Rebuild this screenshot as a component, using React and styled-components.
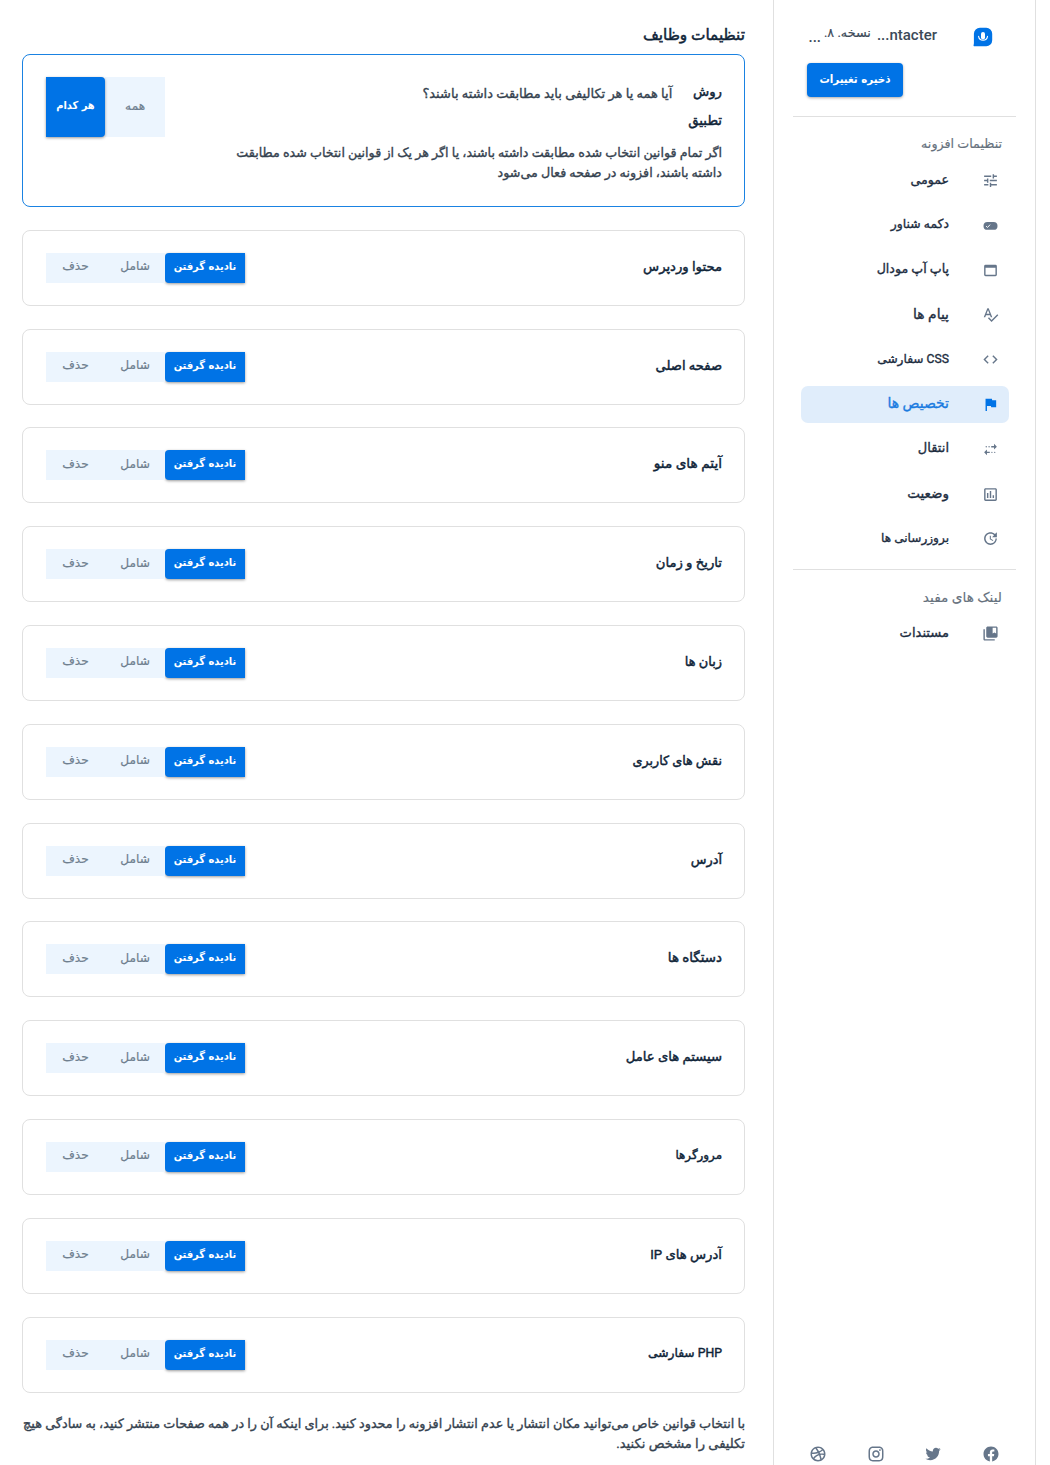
import styled, { createGlobalStyle } from "styled-components";
import {
  MdTune,
  MdOutlineWebAsset,
  MdSpellcheck,
  MdCode,
  MdFlag,
  MdMultipleStop,
  MdOutlineInsertChart,
  MdUpdate,
  MdCollectionsBookmark,
} from "react-icons/md";
import { RiFacebookCircleFill, RiTwitterFill, RiInstagramLine, RiDribbbleLine } from "react-icons/ri";

const GlobalStyle = createGlobalStyle`
  * {
    box-sizing: border-box;
  }

  body {
    margin: 0;
    background-color: #fff;
    color: #0f2438;
    font-family: Roboto, "DejaVu Sans", sans-serif;
    font-size: 13px;
  }
`;

const Page = styled.div`
  width: 1050px;
  height: 1465px;
  padding-right: 14px;
  overflow: hidden;

  display: flex;
`;

const Sidebar = styled.aside`
  width: 263px;
  height: 100%;
  padding: 0 19px;
  border: solid #e0e0e0;
  border-width: 0 1px;

  display: flex;
  flex-direction: column;
`;

const Brand = styled.div`
  height: 117px;
  padding: 26px 23px 0 14px;
  border-bottom: 1px solid #e0e0e0;
`;

const BrandTop = styled.div`
  height: 37.4px;

  display: flex;
  align-items: flex-start;

  svg {
    flex-shrink: 0;
    margin-top: 1px;
  }
`;

const BrandName = styled.div`
  margin-right: 36px;
  color: #3c4a58;
  font-size: 15px;
  font-weight: 500;
  line-height: 19px;
  white-space: nowrap;
`;

const Version = styled.div`
  margin-right: 6px;
  color: #3c4a58;
  font-size: 12.8px;
  line-height: 14px;
  white-space: nowrap;
  -webkit-text-stroke: 0.2px;
`;

const Ellipsis = styled.span`
  margin-right: 3px;
  color: #3c4a58;
  font-size: 15px;
  font-weight: 500;
  line-height: 23px;
`;

const SaveButton = styled.button`
  width: 96px;
  height: 34px;
  margin-right: auto;
  padding: 0 0 3px;
  border: 0;
  border-radius: 4px;
  background-color: #0073e6;
  box-shadow: 0 1px 3px rgba(0, 0, 0, 0.35);

  display: block;

  color: #fff;
  font-family: "DejaVu Sans Condensed", "DejaVu Sans", sans-serif;
  font-size: 11.4px;
  font-weight: 700;
  white-space: nowrap;
`;

const GroupTitle = styled.div`
  height: 42px;
  padding: 17px 14px 0 0;
  color: #66717d;
  font-size: ${({ $size }) => $size || 12.7}px;
  line-height: 20px;
  -webkit-text-stroke: 0.15px;
`;

const Menu = styled.nav`
  padding: 3px 7px 0 8px;

  display: flex;
  flex-direction: column;
  gap: 7.8px;
`;

const MenuItem = styled.a`
  height: 37px;
  padding-right: 10px;
  border-radius: 7px;
  background-color: ${({ $active }) => ($active ? "#e0edfb" : "transparent")};
  color: ${({ $active }) => ($active ? "#1a7be0" : "#1d2d3f")};

  display: flex;
  align-items: center;
  gap: 33px;

  svg {
    flex-shrink: 0;
    color: ${({ $active }) => ($active ? "#0073e6" : "#66768a")};
  }
`;

const MenuLabel = styled.span`
  padding-bottom: 2px;
  font-size: ${({ $size }) => $size || 12.5}px;
  font-weight: 400;
  line-height: 20px;
  white-space: nowrap;
  -webkit-text-stroke: 0.35px;
`;

const Divider = styled.div`
  height: 1px;
  margin-top: 12px;
  flex-shrink: 0;
  background-color: #e0e0e0;
`;

const Social = styled.div`
  height: 20px;
  margin-top: auto;
  padding: 0 16px;
  color: #66768a;

  display: flex;
  justify-content: space-between;
`;

const Main = styled.main`
  width: 773px;
  padding: 22px 28px 0 22px;
`;

const Title = styled.h1`
  height: 32px;
  margin: 0;
  font-size: 15.3px;
  font-weight: 400;
  line-height: 26px;
  -webkit-text-stroke: 0.5px;
`;

const Card = styled.section`
  height: ${({ $tall }) => ($tall ? "153px" : "76px")};
  margin-bottom: 22.8px;
  padding: 22px;
  border: 1px solid ${({ $tall }) => ($tall ? "#1a82e2" : "#e0e0e0")};
  border-radius: 8px;

  display: flex;
  justify-content: space-between;
`;

const CardTitle = styled.h2`
  margin: 0;
  font-size: ${({ $size }) => $size || 13}px;
  font-weight: 400;
  line-height: ${({ $tall }) => ($tall ? "29px" : "27.4px")};
  white-space: nowrap;
  -webkit-text-stroke: 0.45px;
`;

const Rule = styled.div`
  width: 500px;
`;

const RuleTop = styled.div`
  height: 66px;

  display: flex;
  gap: 16px;
`;

const Text = styled.p`
  margin: 0;
  color: #35424f;
  font-size: ${({ $size }) => $size || 12.7}px;
  line-height: 19.7px;
  white-space: nowrap;
  -webkit-text-stroke: 0.35px;
`;

const Question = styled(Text)`
  padding-top: 7px;
`;

const Note = styled.div`
  margin-top: -1px;
`;

const Toggle = styled.div`
  height: ${({ $tall }) => ($tall ? "60px" : "30px")};
  margin-left: 0.6px;

  display: flex;
`;

const Option = styled.button`
  width: ${({ $wide }) => ($wide ? "80px" : "59.7px")};
  height: 100%;
  padding: 0 0 3px;
  border: 0;
  border-radius: ${({ $radius }) => $radius || "0"};
  background-color: ${({ $on }) => ($on ? "#0073e6" : "#ecf5fe")};
  box-shadow: ${({ $on }) => ($on ? "0 1px 3px rgba(0, 0, 0, 0.4)" : "none")};

  color: ${({ $on }) => ($on ? "#fff" : "#6f7f8f")};
  font-family: ${({ $on }) => ($on ? '"DejaVu Sans Condensed", ' : "")}"DejaVu Sans", sans-serif;
  font-size: ${({ $on }) => ($on ? "11px" : "12.2px")};
  font-weight: ${({ $on }) => ($on ? 700 : 400)};
  white-space: nowrap;
  -webkit-text-stroke: ${({ $on }) => ($on ? "0" : "0.2px")};
`;

const LogoIcon = () => (
  <svg width="20" height="20" viewBox="0 0 20 20">
    <path d="M7 .8h6.2A6 6 0 0 1 19.2 6.8v6.4a6 6 0 0 1-6 6H1L.5 18.8l.4-2.6V6.8A6 6 0 0 1 7 .8z" fill="#0073e6" />
    <rect x="8" y="5" width="4" height="7.6" rx="2" fill="#fff" />
    <path d="M5.6 9.4a4.5 4.5 0 0 0 8.9 0" fill="none" stroke="#fff" strokeWidth="1.1" strokeLinecap="round" />
  </svg>
);

const PillIcon = () => (
  <svg width="17" height="17" viewBox="0 0 18 18">
    <rect x="1.6" y="5.4" width="14.8" height="8.2" rx="4.1" fill="currentColor" />
    <path d="M4.3 9.6l1.5 1.5 2.8-3" fill="none" stroke="#fff" strokeWidth="1" />
  </svg>
);

const menu = [
  { label: "عمومی", size: 12.6, Icon: MdTune },
  { label: "دکمه شناور", size: 12.4, Icon: PillIcon },
  { label: "پاپ آپ مودال", size: 12.6, Icon: MdOutlineWebAsset },
  { label: "پیام ها", size: 13.9, Icon: MdSpellcheck },
  { label: "CSS سفارشی", size: 12.2, Icon: MdCode },
  { label: "تخصیص ها", size: 14, Icon: MdFlag, active: true },
  { label: "انتقال", size: 13, Icon: MdMultipleStop },
  { label: "وضعیت", size: 13.5, Icon: MdOutlineInsertChart },
  { label: "بروزرسانی ها", size: 12.1, Icon: MdUpdate },
];

const rules = [
  { label: "محتوا وردپرس", size: 13.2 },
  { label: "صفحه اصلی", size: 13.1 },
  { label: "آیتم های منو", size: 13.7 },
  { label: "تاریخ و زمان", size: 13.2 },
  { label: "زبان ها", size: 12.9 },
  { label: "نقش های کاربری", size: 12.7 },
  { label: "آدرس", size: 12.9 },
  { label: "دستگاه ها", size: 13.4 },
  { label: "سیستم های عامل", size: 13.2 },
  { label: "مرورگرها", size: 11.9 },
  { label: "آدرس های IP", size: 13.2 },
  { label: "PHP سفارشی", size: 12.3 },
];

export default function App() {
  return (
    <>
      <GlobalStyle />
      <Page dir="rtl">
        <Sidebar>
          <Brand>
            <BrandTop>
              <LogoIcon />
              <BrandName dir="ltr">...ntacter</BrandName>
              <Version>نسخه. ۸.</Version>
              <Ellipsis>...</Ellipsis>
            </BrandTop>
            <SaveButton>ذخیره تغییرات</SaveButton>
          </Brand>

          <GroupTitle>تنظیمات افزونه</GroupTitle>
          <Menu>
            {menu.map(({ label, size, Icon, active }) => (
              <MenuItem key={label} $active={active}>
                <Icon size={17} />
                <MenuLabel $size={size}>{label}</MenuLabel>
              </MenuItem>
            ))}
          </Menu>

          <Divider />
          <GroupTitle $size={13.7}>لینک های مفید</GroupTitle>
          <Menu>
            <MenuItem>
              <MdCollectionsBookmark size={17} />
              <MenuLabel $size={13.1}>مستندات</MenuLabel>
            </MenuItem>
          </Menu>

          <Social>
            <RiFacebookCircleFill size={18} />
            <RiTwitterFill size={18} />
            <RiInstagramLine size={18} />
            <RiDribbbleLine size={18} />
          </Social>
        </Sidebar>

        <Main>
          <Title>تنظیمات وظایف</Title>

          <Card $tall>
            <Rule>
              <RuleTop>
                <CardTitle $tall $size={13.3}>
                  روش
                  <br />
                  تطبیق
                </CardTitle>
                <Question $size={13}>آیا همه یا هر تکالیفی باید مطابقت داشته باشند؟</Question>
              </RuleTop>
              <Text>اگر تمام قوانین انتخاب شده مطابقت داشته باشند، یا اگر هر یک از قوانین انتخاب شده مطابقت</Text>
              <Text>داشته باشند، افزونه در صفحه فعال می‌شود</Text>
            </Rule>
            <Toggle $tall>
              <Option>همه</Option>
              <Option $on $radius="0 4px 4px 0">هر کدام</Option>
            </Toggle>
          </Card>

          {rules.map(({ label, size }) => (
            <Card key={label}>
              <CardTitle $size={size}>{label}</CardTitle>
              <Toggle>
                <Option $on $wide $radius="4px 0 0 4px">نادیده گرفتن</Option>
                <Option>شامل</Option>
                <Option>حذف</Option>
              </Toggle>
            </Card>
          ))}

          <Note>
            <Text $size={12.82}>با انتخاب قوانین خاص می‌توانید مکان انتشار یا عدم انتشار افزونه را محدود کنید. برای اینکه آن را در همه صفحات منتشر کنید، به سادگی هیچ</Text>
            <Text $size={13.1}>تکلیفی را مشخص نکنید.</Text>
          </Note>
        </Main>
      </Page>
    </>
  );
}
